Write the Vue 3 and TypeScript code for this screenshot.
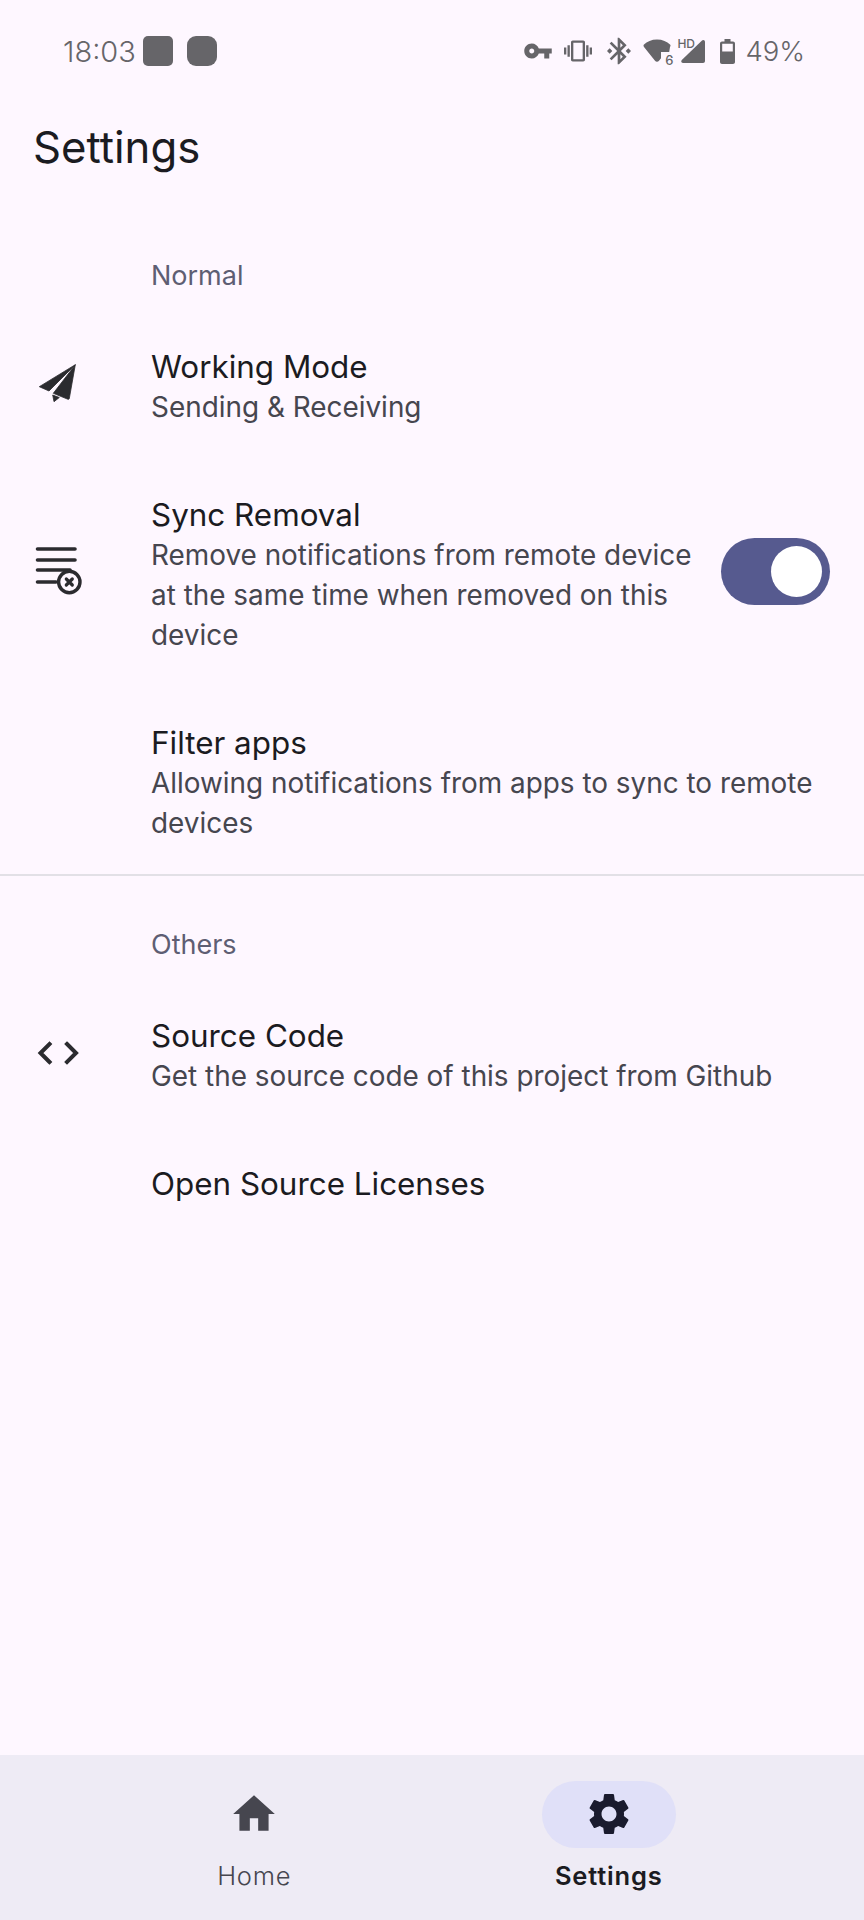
<template>
  <div class="page">
    <div class="status-bar">
      <span class="time">18:03</span>
      <span class="notif notif-a"></span>
      <span class="notif notif-b"></span>
      <div class="status-right">
        <svg class="st-key" viewBox="0 0 24 24"><path d="M12.65 10C11.83 7.67 9.61 6 7 6c-3.31 0-6 2.69-6 6s2.69 6 6 6c2.61 0 4.83-1.67 5.65-4H17v4h4v-4h2v-4H12.65zM7 14c-1.1 0-2-.9-2-2s.9-2 2-2 2 .9 2 2-.9 2-2 2z" /></svg>
        <svg class="st-vib" viewBox="0 0 24 24"><path d="M0 15h2V9H0v6zm3 2h2V7H3v10zm19-8v6h2V9h-2zm-3 8h2V7h-2v10zM16.5 3h-9C6.67 3 6 3.67 6 4.5v15c0 .83.67 1.5 1.5 1.5h9c.83 0 1.5-.67 1.5-1.5v-15c0-.83-.67-1.5-1.5-1.5zM16 19H8V5h8v14z" /></svg>
        <svg class="st-bt" viewBox="0 0 24 24"><path d="M7 12l-2-2-2 2 2 2 2-2zm10.71-4.29L12 2h-1v7.59L6.41 5 5 6.41 10.59 12 5 17.59 6.41 19 11 14.41V22h1l5.71-5.71-4.3-4.29 4.3-4.29zM13 5.83l1.88 1.88L13 9.59V5.83zm1.88 10.46L13 18.17v-3.76l1.88 1.88zM19 10l-2 2 2 2 2-2-2-2z" /></svg>
        <div class="st-wifi">
          <svg viewBox="0 0 28 24" width="28" height="24"><path d="M14 0.5C8.5 0.5 4 2.5 1 5.5 0.3 6.3 0.4 7.2 1 7.9L12 21.8c1 1.3 3 1.3 4 0l2-2.6V13h8.2L27 7.9c.7-.8.7-1.7 0-2.4C24 2.5 19.5 0.5 14 0.5z" /></svg>
          <span class="wifi-6">6</span>
        </div>
        <div class="st-signal">
          <span class="hd">HD</span>
          <svg viewBox="0 0 24 23" width="24" height="23"><path d="M24 2v19c0 1-.8 2-2 2H2c-1.600 0-2.300-1.800-1.200-3L21 .5C22.200-.6 24 .2 24 2z" /></svg>
        </div>
        <svg class="st-bat" viewBox="0 0 15 25" width="15" height="25"><path d="M4.500 0h6v2.500h2.500c1.100 0 2 .9 2 2V23c0 1.100-.9 2-2 2H2c-1.100 0-2-.9-2-2V4.500c0-1.100.9-2 2-2h2.500zM2.200 4.700v7.800h10.600V4.700z" fill-rule="evenodd" /></svg>
        <span class="percent">49%</span>
      </div>
    </div>

    <h1 class="title">Settings</h1>

    <main class="content">
      <section class="group">
        <div class="group-label">Normal</div>
        <div class="row">
          <div class="row-icon">
            <svg viewBox="0 0 48 48" width="48" height="48"><path d="M41.300 1.700 5.300 23.700 15 28z M41.300 1.700 19.300 30.300 34 36.300c.6.200 1.100 0 1.300-.8z M18.700 32l6.600 2.500-5.300 4.200z" fill="#2b2b2f" stroke="#2b2b2f" stroke-width="0.8" stroke-linejoin="round" /></svg>
          </div>
          <div class="row-text">
            <div class="row-title">Working Mode</div>
            <div class="row-sub">Sending &amp; Receiving</div>
          </div>
        </div>
        <div class="row">
          <div class="row-icon row-icon-list">
            <svg viewBox="0 0 48 48" width="48" height="48" fill="none" stroke="#2b2b2f" stroke-linecap="round">
              <path d="M3.500 0H41M3.500 11H41M3.500 21H36M3.500 33H22" stroke-width="3.600" />
              <circle cx="35.300" cy="33" r="10.700" stroke-width="3.400" />
              <path d="M32.300 30l6 6M38.300 30l-6 6" stroke-width="3.200" />
            </svg>
          </div>
          <div class="row-text">
            <div class="row-title">Sync Removal</div>
            <div class="row-sub">Remove notifications from remote device at the same time when removed on this device</div>
          </div>
          <div class="toggle"><span class="thumb"></span></div>
        </div>
        <div class="row row-last">
          <div class="row-icon"></div>
          <div class="row-text">
            <div class="row-title">Filter apps</div>
            <div class="row-sub">Allowing notifications from apps to sync to remote devices</div>
          </div>
        </div>
      </section>

      <div class="divider"></div>

      <section class="group group-others">
        <div class="group-label">Others</div>
        <div class="row">
          <div class="row-icon">
            <svg viewBox="0 0 48 48" width="48" height="48" fill="none" stroke="#2b2b2f" stroke-width="4" stroke-linecap="square">
              <path d="M15.500 12 6.500 21 15.500 30M33 12l9 9-9 9" />
            </svg>
          </div>
          <div class="row-text">
            <div class="row-title">Source Code</div>
            <div class="row-sub">Get the source code of this project from Github</div>
          </div>
        </div>
        <div class="row">
          <div class="row-icon"></div>
          <div class="row-text">
            <div class="row-title">Open Source Licenses</div>
          </div>
        </div>
      </section>
    </main>

    <nav class="nav">
      <div v-for="item in navItems" :key="item.label" class="nav-item" :class="{ active: item.active }">
        <div class="nav-pill">
          <svg viewBox="0 0 24 24" width="50" height="50"><path :d="item.icon" /></svg>
        </div>
        <span class="nav-label">{{ item.label }}</span>
      </div>
    </nav>
  </div>
</template>

<script setup lang="ts">
interface NavItem {
  label: string
  icon: string
  active: boolean
}

const navItems: NavItem[] = [
  {
    label: 'Home',
    icon: 'M10 20v-6h4v6h5v-8h3L12 3 2 12h3v8z',
    active: false,
  },
  {
    label: 'Settings',
    icon: 'M19.14 12.94c.04-.3.06-.61.06-.94 0-.32-.02-.64-.07-.94l2.03-1.58c.18-.14.23-.41.12-.61l-1.92-3.32c-.12-.22-.37-.29-.59-.22l-2.39.96c-.5-.38-1.03-.7-1.62-.94l-.36-2.54c-.04-.24-.24-.41-.48-.41h-3.84c-.24 0-.43.17-.47.41l-.36 2.54c-.59.24-1.13.57-1.62.94l-2.39-.96c-.22-.08-.47 0-.59.22L2.74 8.87c-.12.21-.08.47.12.61l2.03 1.58c-.05.3-.09.63-.09.94s.02.64.07.94l-2.03 1.58c-.18.14-.23.41-.12.61l1.92 3.32c.12.22.37.29.59.22l2.39-.96c.5.38 1.03.7 1.62.94l.36 2.54c.05.24.24.41.48.41h3.84c.24 0 .44-.17.47-.41l.36-2.54c.59-.24 1.13-.56 1.62-.94l2.39.96c.22.08.47 0 .59-.22l1.92-3.32c.12-.22.07-.47-.12-.61l-2.01-1.58zM12 15.6c-1.98 0-3.6-1.62-3.6-3.6s1.62-3.6 3.6-3.6 3.6 1.62 3.6 3.6-1.62 3.6-3.6 3.6z',
    active: true,
  },
]
</script>

<style>
html,
body {
  margin: 0;
  background: #fef7ff;
}
</style>

<style scoped>
.page {
  width: 864px;
  height: 1920px;
  display: flex;
  flex-direction: column;
  background: #fef7ff;
  font-family: Inter, "Noto Sans", sans-serif;
  color: #1b1b21;
  overflow: hidden;
}

.status-bar {
  height: 102px;
  box-sizing: border-box;
  padding: 0 59px 0 63px;
  display: flex;
  align-items: center;
  color: #666569;
  fill: #666569;
}
.time {
  font-size: 29px;
  width: 80px;
  font-weight: 300;
}
.notif {
  width: 30px;
  height: 30px;
  background: #666569;
  margin-right: 14px;
}
.notif-a {
  border-radius: 5px;
}
.notif-b {
  border-radius: 9px;
}
.status-right {
  margin-left: auto;
  display: flex;
  align-items: center;
}
.st-key {
  width: 30px;
  height: 30px;
  margin-right: 11px;
}
.st-vib {
  width: 28px;
  height: 28px;
  margin-right: 11px;
}
.st-bt {
  width: 32px;
  height: 32px;
  margin-right: 8px;
}
.st-wifi {
  position: relative;
  width: 28px;
  height: 24px;
  margin-right: 6px;
}
.st-wifi svg,
.st-signal svg {
  display: block;
}
.wifi-6 {
  position: absolute;
  right: -2px;
  bottom: -4px;
  font-size: 13px;
  line-height: 13px;
  font-weight: 500;
}
.st-signal {
  position: relative;
  width: 28px;
  height: 23px;
  padding-left: 4px;
  box-sizing: border-box;
  margin-right: 15px;
}
.hd {
  position: absolute;
  left: 0;
  top: -2px;
  font-size: 12px;
  line-height: 12px;
  font-weight: 500;
}
.percent {
  margin-left: 10px;
  font-size: 27.5px;
  font-weight: 300;
}

.title {
  margin: 0;
  padding: 0 33px;
  font-size: 43.7px;
  line-height: 92px;
  font-weight: 390;
}

.content {
  flex: 1;
  padding-top: 64px;
}
.group-label {
  padding-left: 151px;
  font-size: 27px;
  line-height: 36px;
  color: #5e5e73;
  margin-bottom: 19px;
  font-weight: 390;
}
.row {
  display: flex;
  align-items: center;
  padding: 34px;
}
.row-last {
  padding-bottom: 31px;
}
.row-icon {
  width: 48px;
  height: 40px;
  margin-right: 69px;
  flex-shrink: 0;
}
.row-icon svg {
  display: block;
  overflow: visible;
  margin-top: -4px;
}
.row-icon-list {
  position: relative;
  top: -2px;
}
.row-text {
  flex: 1;
  min-width: 0;
}
.row-title {
  font-size: 31.4px;
  line-height: 40px;
  color: #1b1b21;
  font-weight: 380;
}
.row-sub {
  font-size: 27.9px;
  line-height: 40px;
  color: #46464f;
  font-weight: 380;
}
.toggle {
  width: 109px;
  height: 67px;
  border-radius: 34px;
  background: #565a8f;
  margin: 0 0 7px 24px;
  flex-shrink: 0;
  display: flex;
  align-items: center;
  justify-content: flex-end;
  padding-right: 8px;
  box-sizing: border-box;
}
.thumb {
  width: 51px;
  height: 51px;
  border-radius: 50%;
  background: #fff;
}
.divider {
  height: 2px;
  background: #e2e0e6;
}
.group-others {
  padding-top: 51px;
}

.nav {
  height: 165px;
  box-sizing: border-box;
  padding: 26px 78px 0 77px;
  background: #eeebf5;
  display: flex;
}
.nav-item {
  flex: 1;
  display: flex;
  flex-direction: column;
  align-items: center;
}
.nav-pill {
  width: 134px;
  height: 67px;
  border-radius: 34px;
  display: flex;
  align-items: center;
  justify-content: center;
  fill: #46464f;
}
.nav-pill svg {
  position: relative;
  top: -1px;
}
.nav-label {
  margin-top: 10px;
  font-size: 25.5px;
  line-height: 36px;
  color: #46464f;
  letter-spacing: 0.8px;
  font-weight: 350;
}
.active .nav-pill {
  background: #e0e0f8;
  fill: #1a1b2e;
}
.active .nav-label {
  color: #1b1b21;
  font-weight: 600;
}
</style>
